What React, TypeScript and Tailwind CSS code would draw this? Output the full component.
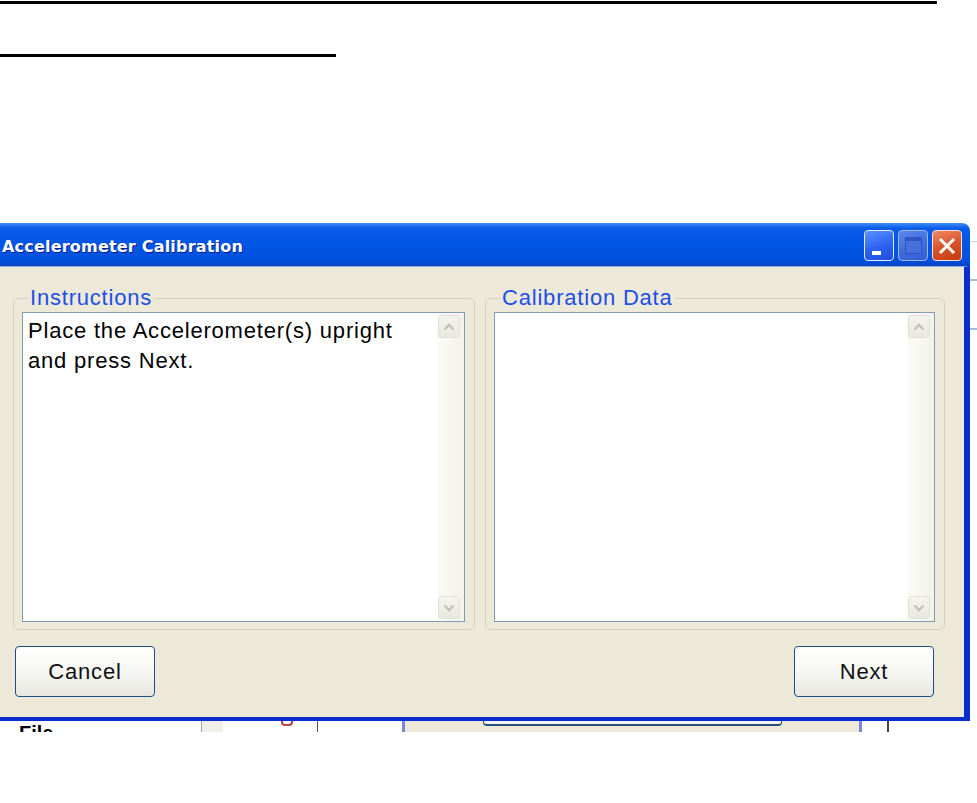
import React from 'react';

const sans = "font-['Liberation_Sans',Arial,sans-serif]";

const Chevron = ({ up }: { up?: boolean }) => (
  <svg width="12" height="8" viewBox="0 0 12 8">
    <path
      d={up ? 'M1.5 6.5 L6 2 L10.5 6.5' : 'M1.5 1.5 L6 6 L10.5 1.5'}
      fill="none"
      stroke="#c3c2b8"
      strokeWidth="2.4"
    />
  </svg>
);

const ScrollButton = ({ up }: { up?: boolean }) => (
  <div className="w-[22px] h-[23px] rounded-[3px] border border-[#e4e2d8] bg-[linear-gradient(180deg,#f4f3ee,#e9e8e0)] flex items-center justify-center">
    <Chevron up={up} />
  </div>
);

const TextPanel = ({ text }: { text?: string[] }) => (
  <div className="flex-1 flex border border-[#7f9db9] bg-white">
    <div className={`flex-1 pl-[5px] pt-[3px] text-[22px] leading-[30px] tracking-[0.8px] text-black ${sans}`}>
      {text?.map((line) => (
        <div key={line}>{line}</div>
      ))}
    </div>
    <div className="w-[27px] flex flex-col justify-between pl-[1px] pr-[4px] py-[2px] bg-[linear-gradient(90deg,#fbfbf8,#f3f2ea)]">
      <ScrollButton up />
      <ScrollButton />
    </div>
  </div>
);

const GroupBox = ({ title, width, text }: { title: string; width: string; text?: string[] }) => (
  <div className={`relative ${width} h-[332px] flex rounded-[6px] border border-[#d3d0bd] pl-[8px] pr-[9px] pt-[13px] pb-[7px]`}>
    <span className={`absolute left-[14px] -top-[14px] px-[2px] bg-[#ece9d8] text-[22px] leading-[26px] tracking-[0.8px] text-[#1d4fe6] ${sans}`}>
      {title}
    </span>
    <TextPanel text={text} />
  </div>
);

const DialogButton = ({ label }: { label: string }) => (
  <button className={`w-[140px] h-[51px] rounded-[4px] border border-[#1c4f88] bg-[linear-gradient(180deg,#ffffff_0%,#f4f4f0_60%,#e6e5de_100%)] text-[22px] tracking-[0.8px] text-[#111] ${sans}`}>
    {label}
  </button>
);

const TitleButton = ({ kind }: { kind: 'min' | 'max' | 'close' }) => {
  const look =
    kind === 'close'
      ? 'border-[#f4e2dc] bg-[linear-gradient(160deg,#f08a64,#d9532a_50%,#c23a10)]'
      : kind === 'max'
        ? 'border-[#9fb6ee] bg-[linear-gradient(160deg,#5a86ec,#3e6ae0_60%,#345ed6)]'
        : 'border-[#e6ecff] bg-[linear-gradient(160deg,#5b93ff,#2b62f0_55%,#1d4ee0)]';
  return (
    <div className={`w-[30px] h-[31px] rounded-[4px] border ${look} flex items-center justify-center`}>
      {kind === 'min' && <div className="w-[9px] h-[4px] bg-white mt-[14px] -ml-[6px]" />}
      {kind === 'max' && <div className="w-[17px] h-[17px] border border-[#2f55c4] border-t-[4px] bg-[#4670dc]" />}
      {kind === 'close' && (
        <svg width="18" height="18" viewBox="0 0 18 18">
          <path d="M3 3 L15 15 M15 3 L3 15" stroke="white" strokeWidth="3" strokeLinecap="square" />
        </svg>
      )}
    </div>
  );
};

const App = () => {
  return (
    <div className="w-[977px] h-[803px] bg-white overflow-hidden flex flex-col">
      <div className="mt-[1px] h-[3px] w-[937px] bg-black" />
      <div className="mt-[50px] h-[3px] w-[336px] bg-black" />

      <div className="mt-[166px] flex">
        <div className="w-[970px] flex flex-col">
          {/* title bar */}
          <div className="h-[43px] rounded-tr-[8px] bg-[linear-gradient(180deg,#3d8ef8_0%,#0a5ce9_12%,#0055e5_50%,#0050dc_88%,#0343c6_100%)] flex items-center pl-[2px] pr-[8px]">
            <span className="flex-1 pt-[5px] text-[16px] font-bold tracking-[0.2px] text-white font-['DejaVu_Sans',sans-serif] [text-shadow:1px_1px_0_#0b1d8a]">
              Accelerometer Calibration
            </span>
            <div className="flex gap-[4px] pt-[2px]">
              <TitleButton kind="min" />
              <TitleButton kind="max" />
              <TitleButton kind="close" />
            </div>
          </div>
          {/* body */}
          <div className="h-[455px] bg-[#ece9d8] border-r-[6px] border-b-[4px] border-[#0a2bcf] border-t border-t-[#8ea8d8] flex flex-col pt-[31px] pl-[13px] pr-[14px] pb-[16px]">
            <div className="flex gap-[10px]">
              <GroupBox
                title="Instructions"
                width="w-[462px]"
                text={['Place the Accelerometer(s) upright', 'and press Next.']}
              />
              <GroupBox title="Calibration Data" width="w-[460px]" />
            </div>
            <div className="mt-[16px] flex justify-between pl-[2px] pr-[16px]">
              <DialogButton label="Cancel" />
              <DialogButton label="Next" />
            </div>
          </div>
          {/* window behind, peeking out below */}
          <div className="h-[11px] flex overflow-hidden">
            <div className="w-[201px] pl-[19px] pt-[2px] text-[20px] leading-[20px] font-bold text-black font-['Liberation_Sans',sans-serif]">
              File
            </div>
            <div className="w-[22px] border-l border-[#9aa6b8] bg-[#f0efe8]" />
            <div className="w-[95px] flex justify-end pr-[24px] border-r border-[#555]">
              <div className="w-[12px] h-[5px] border-b-2 border-x-2 border-[#b44] rounded-b-[4px]" />
            </div>
            <div className="w-[84px]" />
            <div className="w-[460px] bg-[#ece9d8] border-x-[3px] border-[#7b86d8] flex pl-[78px]">
              <div className="w-[299px] h-[5px] border-b-2 border-x border-[#2a4f80] rounded-b-[4px] bg-[#f3f2ec]" />
            </div>
            <div className="w-[27px] border-r-2 border-[#444]" />
          </div>
        </div>
        {/* edge of window behind */}
        <div className="flex-1 flex flex-col pt-[18px]">
          <div className="h-[1px] bg-[#c8d2dc]" />
          <div className="mt-[37px] h-[2px] bg-[#a9bbd6]" />
          <div className="mt-[47px] h-[2px] bg-[#a9bbd6]" />
        </div>
      </div>
    </div>
  );
};

export default App;
